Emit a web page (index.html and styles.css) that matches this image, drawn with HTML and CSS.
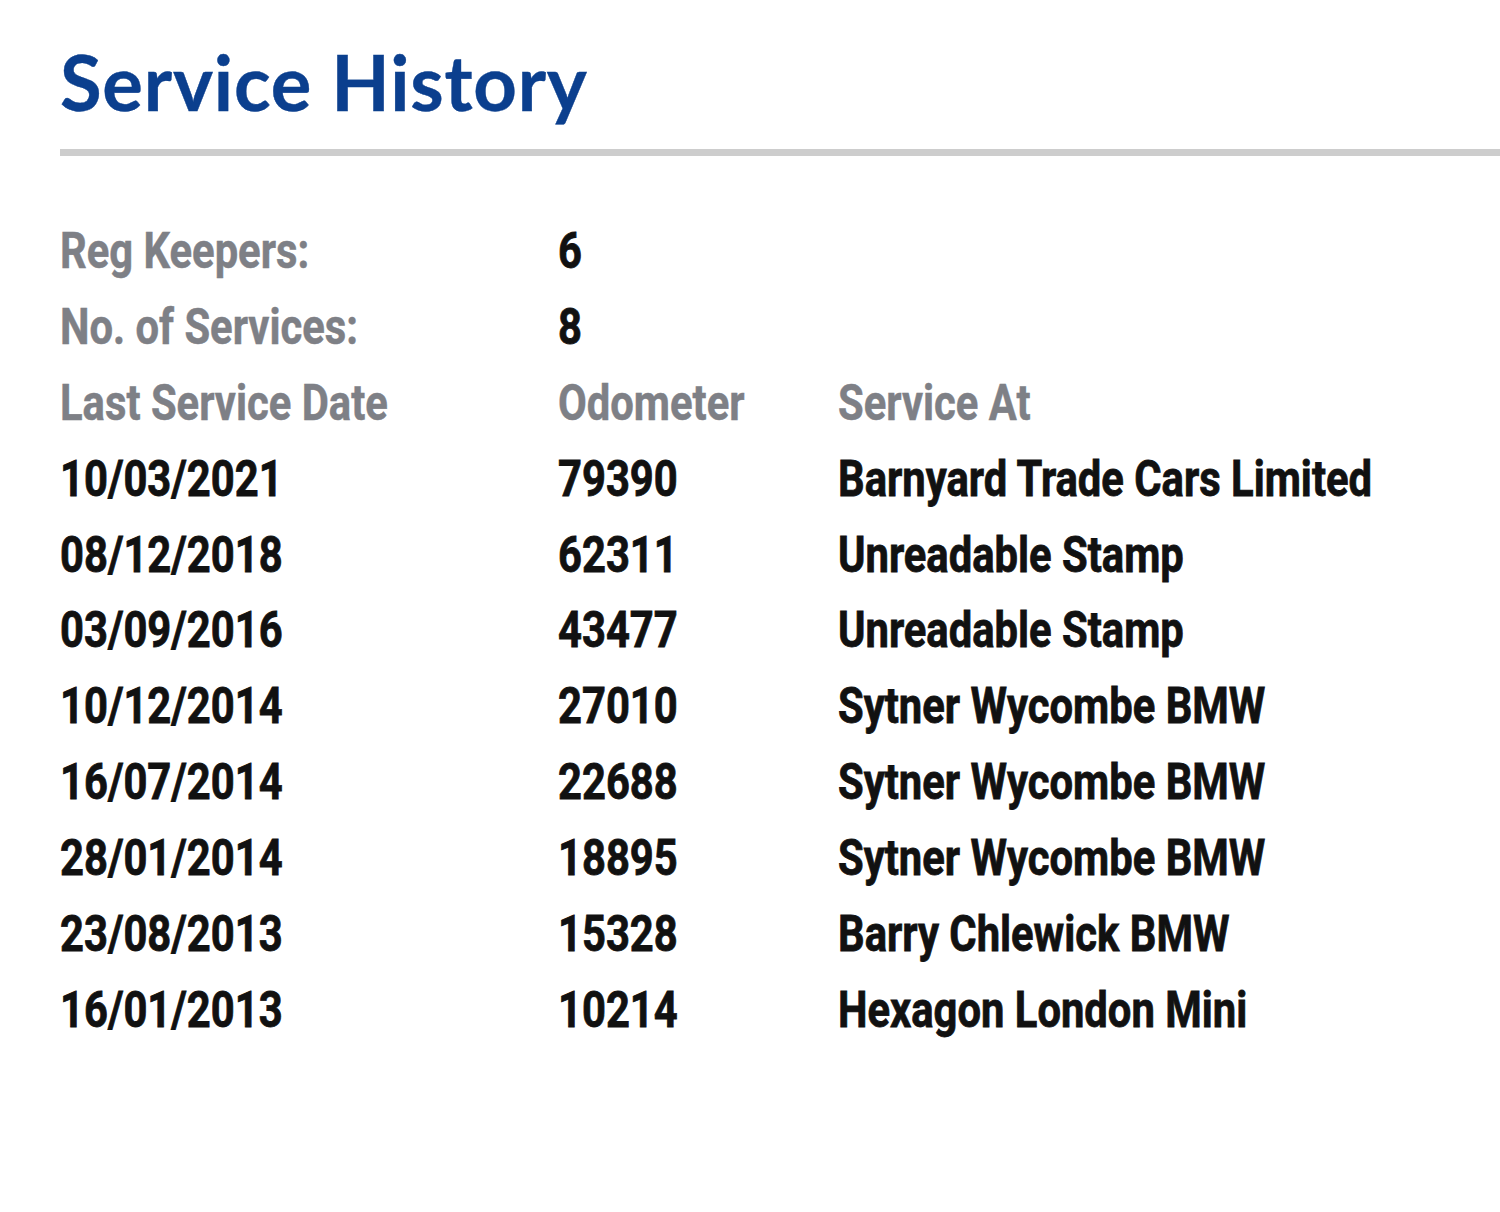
FILE: index.html
```html
<!DOCTYPE html>
<html lang="en">
<head>
<meta charset="utf-8">
<title>Service History</title>
<link rel="stylesheet" href="styles.css">
</head>
<body>
<main class="page">
  <h1 class="title">Service History</h1>
  <hr class="rule">
  <div class="grid">
    <div class="cell label"><span>Reg Keepers:</span></div>
    <div class="cell value"><span>6</span></div>
    <div class="cell"></div>

    <div class="cell label"><span>No. of Services:</span></div>
    <div class="cell value"><span>8</span></div>
    <div class="cell"></div>

    <div class="cell label"><span>Last Service Date</span></div>
    <div class="cell label"><span>Odometer</span></div>
    <div class="cell label"><span>Service At</span></div>

    <div class="cell value"><span>10/03/2021</span></div>
    <div class="cell value"><span>79390</span></div>
    <div class="cell value"><span>Barnyard Trade Cars Limited</span></div>

    <div class="cell value"><span>08/12/2018</span></div>
    <div class="cell value"><span>62311</span></div>
    <div class="cell value"><span>Unreadable Stamp</span></div>

    <div class="cell value"><span>03/09/2016</span></div>
    <div class="cell value"><span>43477</span></div>
    <div class="cell value"><span>Unreadable Stamp</span></div>

    <div class="cell value"><span>10/12/2014</span></div>
    <div class="cell value"><span>27010</span></div>
    <div class="cell value"><span>Sytner Wycombe BMW</span></div>

    <div class="cell value"><span>16/07/2014</span></div>
    <div class="cell value"><span>22688</span></div>
    <div class="cell value"><span>Sytner Wycombe BMW</span></div>

    <div class="cell value"><span>28/01/2014</span></div>
    <div class="cell value"><span>18895</span></div>
    <div class="cell value"><span>Sytner Wycombe BMW</span></div>

    <div class="cell value"><span>23/08/2013</span></div>
    <div class="cell value"><span>15328</span></div>
    <div class="cell value"><span>Barry Chlewick BMW</span></div>

    <div class="cell value"><span>16/01/2013</span></div>
    <div class="cell value"><span>10214</span></div>
    <div class="cell value"><span>Hexagon London Mini</span></div>
  </div>
</main>
</body>
</html>
```
FILE: styles.css
```css
html, body {
  margin: 0;
  padding: 0;
  background: #ffffff;
}

.page {
  padding: 44px 0 0 60px;
}

.title {
  margin: 0;
  font-family: Lato, "Open Sans", sans-serif;
  font-weight: 700;
  font-size: 76px;
  line-height: 76px;
  letter-spacing: 0.8px;
  color: #0b3f8e;
  -webkit-text-stroke: 0.4px #0b3f8e;
}

.rule {
  margin: 29px 0 0 0;
  border: 0;
  height: 7px;
  background: #cdcdcd;
}

.grid {
  margin-top: 58px;
  display: grid;
  grid-template-columns: 498px 280px 1fr;
  grid-auto-rows: 75.9px;
  font-family: Roboto, "Liberation Sans", sans-serif;
  font-weight: 700;
  font-size: 50px;
  line-height: 75.9px;
}

.cell {
  white-space: nowrap;
}

.cell span {
  display: inline-block;
  transform: scaleX(0.835);
  transform-origin: left center;
}

.label {
  color: #7e8086;
  -webkit-text-stroke: 0.5px #7e8086;
}

.value {
  color: #111111;
  -webkit-text-stroke: 0.8px #111111;
}
```
